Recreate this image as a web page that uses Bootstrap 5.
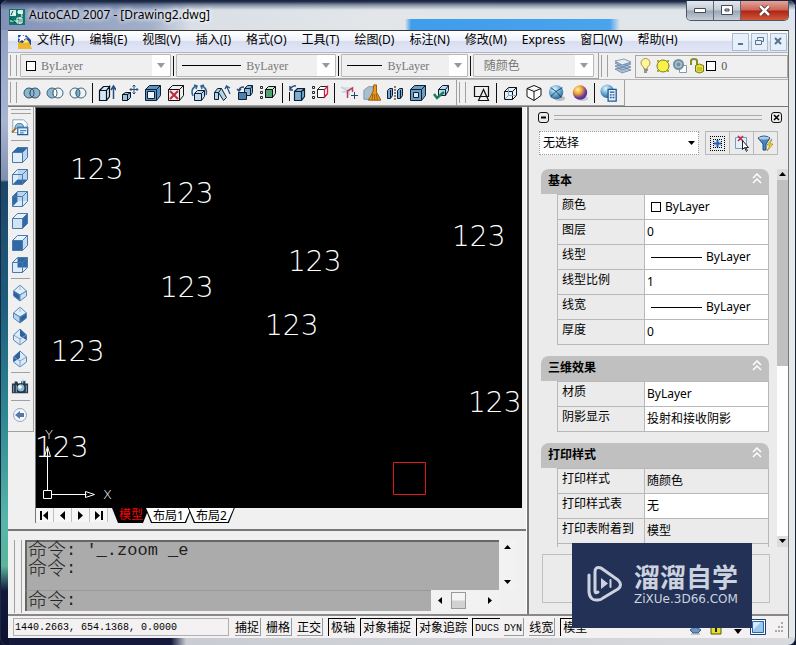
<!DOCTYPE html>
<html lang="zh-CN">
<head>
<meta charset="utf-8">
<meta name="viewport" content="width=device-width, initial-scale=1">
<title>AutoCAD 2007 - [Drawing2.dwg]</title>
<link href="https://cdn.jsdelivr.net/npm/bootstrap@5.3.0/dist/css/bootstrap.min.css" rel="stylesheet">
<style>
:root{--ui:"Noto Sans","Noto Sans CJK SC",sans-serif;--chrome:#f0f0f0;--line:#a0a0a0}
body{font:12px/16px var(--ui);color:#000;background:#0c1430}
button,select,input{font:inherit;color:inherit}
button{padding:0;border:0;background:none}
svg{display:block}
.frame{min-height:100vh;padding:0 6px 7px 7px;border:1px solid #1b2740;border-radius:7px 7px 8px 8px;
 background:linear-gradient(#8a9abd,#a9b6d2 120px,#7f90ae 179px,#1c4668 181px,#1d5c7c 300px,#2e8a94 420px,#55b7a8 520px,#59b59b 565px,#101a3c 590px,#0d1230) left/8px 100% no-repeat,
 linear-gradient(90deg,#151a3c 170px,#c9ccd2 185px,#d9dadd) bottom/100% 8px no-repeat,#e6e9ea}
.titlebar{height:29px;margin:0 -6px 0 -7px;padding:0 6px 0 8px;border-radius:6px 6px 0 0;
 background:linear-gradient(#14203c,#37496f88 4px,transparent 9px),
 linear-gradient(90deg,transparent,#3f9dec 6px,#4aa3ee 205px,transparent) 404px 18px/215px 11px no-repeat,
 linear-gradient(90deg,#8292b6,#a3b0ca 150px,#d9dfe6 190px,#e2e6e9 370px,#dfe5ea)}
.titlebar h1{font-size:12px;line-height:28px;margin:0;font-weight:400;text-shadow:0 0 5px #fff,0 0 5px #fff}
.wbtns{height:20px;border:1px solid #4e5662;border-top:0;border-radius:0 0 5px 5px;overflow:hidden}
.wbtns button{width:27px;background:linear-gradient(#e4e8ee,#c2c9d3 48%,#9aa5b6 52%,#c5ced9);border-right:1px solid #5c6675}
.wbtns button:last-child{width:47px;border:0;background:linear-gradient(#e3a59a,#cc6455 48%,#ad2413 52%,#cf5a3c)}
.client{background:var(--chrome);border-top:1px solid #333;border-right:1px solid #777}
.menubar{height:21px;padding:0 1px 0 5px;background:linear-gradient(#fff,#eef2fb 45%,#d8def0 50%,#e2e7f6)}
.menubar a{color:#000;text-decoration:none;padding:0 7px 3px 8px;line-height:18px}
.menubar a:first-of-type{padding-left:4px}
.mdi{gap:2px}
.mdi button{width:17px;height:18px;border:1px solid #a9bccf;background:#e6f0fa;display:grid;place-items:center}
.bar{height:27px;border-top:1px solid #b5b5b5}
.bar-in{border-right:1px solid var(--line);border-bottom:1px solid var(--line)}
.props-half{flex:590 1 0}.layer-half{flex:190 1 0}
.grip{width:7px;margin:2px 3px 2px 2px;border:solid var(--line);border-width:0 1px;flex:none}
.combo{height:23px;border:1px solid #b8b8b8;border-radius:1px;background:#efefef;color:#777;padding-left:5px;min-width:0}
.combo select{appearance:none;border:0;background:transparent;color:#777;flex:1;min-width:0;padding:0 0 0 5px;font:12px/20px "Liberation Serif","Noto Sans CJK SC",serif;outline:0}
.combo i{width:18px;align-self:stretch;background:#fff;display:grid;place-items:center;flex:none}
.cA{flex:150 1 0}.cB{flex:159 1 0}.cC{flex:124 1 0}.cD{flex:119 1 0}
.vsep{width:1px;height:20px;background:#111;margin:0 2px;flex:none}
.tools .vsep{margin:0 2px 0 3px}
.rule{height:1px;background:#000;flex:none}
.r60{width:59px}.r35{width:35px}.r50{width:51px}
.sw{width:10px;height:10px;border:1px solid #000;background:#fff;flex:none}
.layerbox{flex:153 1 0;border:1px solid #a8a8a8;height:23px;padding-left:2px;gap:1px;color:#555;font-family:"Liberation Serif",serif}
.tools button{width:23px;height:24px;display:grid;place-items:center}
.sidebar{width:26px;height:325px;border-right:1px solid var(--line);border-bottom:1px solid var(--line);flex:none}
.sidebar button{width:24px;height:22px;display:grid;place-items:center;padding-right:2px}
.hgrip{width:20px;height:5px;border:solid var(--line);border-width:1px 0;margin:2px 0}
.hsep{width:19px;height:1px;background:var(--line);margin:2px 0 3px}
.work{border-top:1px solid #777}
.docarea{min-width:0;flex:1;border-right:1px solid #fff}
.model{background:#000;flex:1;position:relative;border-left:1px solid #777;border-top:1px solid #555}
.model,.tabs{margin-left:-3px}
.model text{font-family:"DejaVu Sans";font-weight:200;fill:#fff;font-size:28px}
.model .ax{font-size:13px}
.tabs{height:15px;border-left:1px solid #777}
.tabs .nav4{width:18px;height:14px;border-right:1px solid #c0c0c0;background:#f6f6f6;display:grid;place-items:center}
.sheet{height:15px;line-height:14px;margin-right:-4px;background:#000;clip-path:polygon(0 0,100% 0,calc(100% - 6px) 100%,6px 100%)}
.sheet button{line-height:13px;margin:0}
.sheet.on{color:#f00;padding:0 6px 0 7px}
.sheet.off{padding:0 1px 1px}
.sheet.off button{background:#fff;padding:0 7px;clip-path:polygon(0 0,100% 0,calc(100% - 6px) 100%,6px 100%);height:14px}
.cmd{height:85px;border-top:2px solid #777;padding:9px 10px 1px 6px;margin-top:6px;background:var(--chrome)}
.cmd .grip{margin:0 3px 0 0;width:8px}
.cmdlog{background:#ababab;border:solid #666;border-width:2px 0 0 2px;font:17px/18px "Liberation Mono",monospace;color:#222;height:50px;padding-left:1px}
.cj{font:19px/18px "Noto Sans CJK SC",sans-serif;font-weight:300;padding-bottom:4px}
.cmdlog p{margin:0;white-space:pre;height:18px;display:flex;align-items:center}
.cmdin{background:#ababab;border:solid #999;border-left-color:#666;border-width:1px 0 0 2px;height:21px;font:17px/18px "Liberation Mono",monospace;color:#222;padding-left:1px;min-width:0}
.cmdin label{display:flex;align-items:center;flex:none}
.cmdin input{border:0;background:none;outline:0;min-width:0}
.vs{width:17px;background:#f2f2f2;flex:none;padding:5px 0}
.hs{width:69px;background:#f2f2f2;flex:none;padding:1px 7px}
.thumb{width:15px;height:17px;border:1px solid #999;background:linear-gradient(#f4f4f4 45%,#d2d2d2 55%);margin-right:14px}
.palette{width:261px;border-left:2px solid #777;background:#ebebeb;flex:none;padding:4px 0 0}
.ptop{padding:0 6px 0 9px;gap:4px;height:12px}
.ptop button{width:11px;height:11px;border:1px solid #111;border-radius:3px;display:grid;place-items:center;flex:none}
.dbl{height:5px;border:solid #aaa;border-width:1px 0;flex:1;margin:0 5px 0 1px}
.psel{height:24px;margin:8px 10px 0 10px}
.psel select{appearance:none;border:1px dotted #999;border-radius:0;width:100%;height:24px;background:#fff;padding:0 3px;outline:0}
.psel .arr{position:absolute;right:4px;top:10px;pointer-events:none}
.psel .bx{border:1px solid #b8b8b8;margin-left:6px}
.psel .bx button{width:23px;height:22px;display:grid;place-items:center}
.psel .bx button+button{border-left:1px solid #b8b8b8;width:24px}
.props{height:378px;margin-top:14px;overflow:hidden}
.plist{padding:0 8px 0 12px;flex:1}
.plist h2{font-size:12px;line-height:24px;font-weight:700;margin:0;height:25px;background:#c0c0c0;border-radius:8px 8px 0 0;padding:0 7px}
.plist table{width:calc(100% - 16px);margin:0 0 11px 16px;border-collapse:collapse;table-layout:fixed}
.plist th,.plist td{height:25px;border:1px solid #b8b8b8;padding:0 0 0 4px;font-weight:400;line-height:16px}
.plist th{width:87px;padding-bottom:4px}
.plist td{background:#fff;padding:0 0 0 2px}
.plist td.dim{background:#ebebeb}
.lt{padding-left:3px}
.psb{width:11px;flex:none;background:linear-gradient(#c0c0c0 197px,#fff 197px)}
.psb button{width:11px;height:11px;display:grid;place-items:center;background:#dcdcdc}
.desc{height:49px;margin:7px 18px 11px 13px;border:1px solid #c0c0c0}
.status{height:24px;border-top:2px solid #888;padding:1px 4px 1px 5px;font:12px/14px "Liberation Mono","Noto Sans CJK SC",monospace;background:#f3f1f1}
.coord{width:216px;height:18px;border:1px solid #b0b0b0;font-size:10px;line-height:18px;padding-left:1px;margin-right:6px}
.coord,.status .num{font-family:"Liberation Mono",monospace}
.status .t{height:18px;padding:4px 1px 0 0;border:solid #999;border-width:0 1px 1px 0;margin-right:5px;white-space:nowrap}
.status .t.p{border:solid #000;border-width:1px 0 0 1px;padding:3px 1px 0 2px;margin-right:4px}
.status .num{font-size:10px}
.brand{position:absolute;right:43px;bottom:17px;width:180px;height:85px;background:#233157;color:#cdd3de;padding:0 12px 3px 15px;gap:12px}
.brand b{font:700 26px/26px "Noto Sans CJK SC",sans-serif;display:block;margin-bottom:4px}
.brand small{font:12px/12px "DejaVu Sans",sans-serif;display:block;white-space:nowrap}
</style>
</head>
<body>
<svg width="0" height="0" class="position-absolute" aria-hidden="true">
<defs>
<radialGradient id="gs" cx=".4" cy=".3" r=".8"><stop offset="0" stop-color="#e4f6ff"/><stop offset=".5" stop-color="#69a9d3"/><stop offset="1" stop-color="#1d4f7c"/></radialGradient>
<radialGradient id="gp" cx=".35" cy=".3" r=".75"><stop offset="0" stop-color="#fff3a0"/><stop offset=".4" stop-color="#f0a030"/><stop offset=".75" stop-color="#6a3aa0"/><stop offset="1" stop-color="#4a2b95"/></radialGradient>
<symbol id="box" viewBox="0 0 18 18"><g stroke="#4a7aa9" stroke-linejoin="round"><path fill="var(--f)" d="M1.500 6.500h10v10h-10z"/><path fill="var(--t)" d="M1.500 6.500l5-5h10l-5 5z"/><path fill="var(--s)" d="M11.500 6.500l5-5v10l-5 5z"/></g></symbol>
<symbol id="glass" viewBox="0 0 18 18"><path d="M1.500 6.500l5-5h10v10l-5 5h-10z" fill="#dcecfb"/><path d="M7 2h9v9H7z" fill="#b9d5f0"/></symbol>
<symbol id="iso" viewBox="0 0 18 18"><g stroke="#5b87b8" stroke-linejoin="round"><path fill="#dfeefb" d="M9 1l6.500 6L9 11 2.500 7z"/><path fill="var(--f,#b5d3ee)" d="M2.500 7L9 11v6l-6.500-5z"/><path fill="var(--s,#c9e0f5)" d="M15.500 7L9 11v6l6.500-5z"/><path d="M9 1v5" stroke="#9dbbdb"/></g></symbol>
</defs>
</svg>
<div class="frame d-flex flex-column position-relative">
<header class="titlebar d-flex">
 <svg class="mt-2 me-1" width="16" height="16" viewBox="0 0 16 16"><path fill="#0c7668" d="M0 0h16v16H0z"/><path fill="#cfeee4" d="M1 1h6v6H1zM9 1h5v4H9z"/><path d="M2 6l2-4 2 4M8 3q5-1 5 5M1 12h9M11 8v7M8 9h5v5H8z" fill="none" stroke="#fff"/><path stroke="#084b43" d="M1 9l6 5M2 6l2-4"/></svg>
 <h1 class="flex-grow-1">AutoCAD 2007 - [Drawing2.dwg]</h1>
 <div class="wbtns d-flex">
  <button aria-label="最小化"><svg class="m-auto" width="13" height="6"><path d="M.5.500h11v4H.5z" fill="#fff" stroke="#444b57"/></svg></button>
  <button aria-label="最大化"><svg class="m-auto" width="13" height="11"><path d="M.5.500h11v9H.5zM4 4h4v2H4z" fill="#fff" fill-rule="evenodd" stroke="#444b57"/></svg></button>
  <button aria-label="关闭"><svg class="m-auto" width="13" height="11" viewBox="0 0 13 11"><path d="M2 1l9 9M11 1l-9 9" stroke="#4b2520" stroke-width="4"/><path d="M2 1l9 9M11 1l-9 9" stroke="#fff" stroke-width="2.500"/></svg></button>
 </div>
</header>
<div class="client d-flex flex-column flex-grow-1">
<nav class="menubar d-flex align-items-center">
 <svg class="ms-1" width="16" height="18" viewBox="0 0 16 18"><path fill="#244a9b" d="M1 2h8l5 5v5H1z"/><path fill="#fff" d="M5 0l1 3 3-2-1 3 3 1-4 1 1 3-3-2-3 2 1-3-3-1 3-1z"/><path fill="#eeb72e" d="M1 16V9l5 1 3-4 3 3 3 7z"/><path fill="#ffe98b" d="M6 10l3-4 3 3z"/></svg>
 <a href="#">文件(F)</a><a href="#">编辑(E)</a><a href="#">视图(V)</a><a href="#">插入(I)</a><a href="#">格式(O)</a><a href="#">工具(T)</a><a href="#">绘图(D)</a><a href="#">标注(N)</a><a href="#">修改(M)</a><a href="#">Express</a><a href="#">窗口(W)</a><a href="#">帮助(H)</a>
 <div class="mdi d-flex ms-auto">
  <button aria-label="最小化文档"><svg width="9" height="9"><path d="M2 7h5" stroke="#58728f" stroke-width="2"/></svg></button>
  <button aria-label="还原文档"><svg width="9" height="9"><path d="M2.500 2.500v-2h6v4h-2M.5 3.500h6v4h-6z" fill="none" stroke="#58728f"/></svg></button>
  <button aria-label="关闭文档"><svg width="9" height="9"><path d="M1 1l6 6M7 1l-6 6" stroke="#58728f" stroke-width="2"/></svg></button>
 </div>
</nav>
<div class="bar d-flex">
 <div class="bar-in props-half d-flex align-items-center pe-1">
  <span class="grip align-self-stretch"></span>
  <div class="combo cA d-flex align-items-center"><span class="sw"></span><select aria-label="颜色控制"><option>ByLayer</option></select><i><svg width="8" height="5"><path d="M0 0h8l-4 5z" fill="#999"/></svg></i></div>
  <span class="vsep"></span>
  <div class="combo cB d-flex align-items-center"><span class="rule r60"></span><select aria-label="线型控制"><option>ByLayer</option></select><i><svg width="8" height="5"><path d="M0 0h8l-4 5z" fill="#999"/></svg></i></div>
  <span class="vsep"></span>
  <div class="combo cC d-flex align-items-center"><span class="rule r35"></span><select aria-label="线宽控制"><option>ByLayer</option></select><i><svg width="8" height="5"><path d="M0 0h8l-4 5z" fill="#999"/></svg></i></div>
  <span class="vsep"></span>
  <div class="combo cD d-flex align-items-center"><select aria-label="打印样式控制"><option>随颜色</option></select><i><svg width="8" height="5"><path d="M0 0h8l-4 5z" fill="#999"/></svg></i></div>
 </div>
 <div class="layer-half d-flex align-items-center">
  <span class="grip align-self-stretch"></span>
  <button class="ps-1 pe-1" aria-label="图层特性管理器"><svg width="16" height="16" viewBox="0 0 16 16"><g fill="#a9c0da" stroke="#5b7896" stroke-width=".7"><path d="M0 11l9-2 7 3-9 3zM0 8l9-2 7 3-9 3zM0 5l9-2 7 3-9 3z"/><path fill="#e5eef7" d="M0 3l9-2 7 3-9 3z"/></g></svg></button>
  <div class="layerbox d-flex align-items-center">
   <svg width="16" height="18" viewBox="0 0 16 18"><path d="M6 12c0-3-3-3-3-6a4.500 4.500 0 0 1 9 0c0 3-3 3-3 6z" fill="#fff4a0" stroke="#a79a3a"/><path d="M6 13h4M6 15h3" stroke="#777" stroke-width="1.500"/></svg>
   <svg width="16" height="18" viewBox="0 0 16 18"><path d="M2 3h2v2H2zM12 3h2v2h-2zM2 13h2v2H2zM12 13h2v2h-2z" fill="#a8b030"/><circle cx="8" cy="9" r="6" fill="#fbf044" stroke="#77792c"/></svg>
   <svg width="16" height="18" viewBox="0 0 16 18"><path fill="#fff" stroke="#8699a8" d="M7.500 8.500h7v7h-7z"/><circle cx="6.500" cy="7.500" r="4.500" fill="#a9c4ce" stroke="#6f919f" stroke-width="2"/><circle cx="6.500" cy="7.500" r="2" fill="#6f919f"/></svg>
   <svg width="16" height="18" viewBox="0 0 16 18"><path d="M2 8V4q0-2 3-2t3 2v6" fill="none" stroke="#888b22" stroke-width="2"/><path d="M6.500 8.500q4-3 8 0v6q-4 3-8 0z" fill="#e9e13c" stroke="#77771c"/><path d="M8 11h5M8 13h5" stroke="#aaa324"/></svg>
   <span class="sw"></span><span class="ps-1">0</span>
  </div>
 </div>
</div>
<div class="bar tools d-flex">
 <div class="bar-in d-flex align-items-center">
  <span class="grip align-self-stretch"></span>
  <button aria-label="并集"><svg width="18" height="12" viewBox="0 0 18 12"><g fill="#8fb6cd" stroke="#2d5168"><circle cx="6" cy="6" r="5"/><circle cx="12" cy="6" r="5"/><ellipse cx="9" cy="6" rx="2" ry="4"/></g></svg></button>
  <button aria-label="差集"><svg width="18" height="12" viewBox="0 0 18 12"><g stroke="#3f657d"><circle cx="6" cy="6" r="5" fill="#8fb6cd"/><circle cx="12" cy="6" r="5" fill="#f0f6fa"/><ellipse cx="9" cy="6" rx="2" ry="4" fill="#fff"/></g></svg></button>
  <button aria-label="交集"><svg width="18" height="12" viewBox="0 0 18 12"><g stroke="#3f657d"><circle cx="6" cy="6" r="5" fill="#eef3f6"/><circle cx="12" cy="6" r="5" fill="#eef3f6"/><ellipse cx="9" cy="6" rx="2" ry="4" fill="#7fa8c2"/></g></svg></button>
  <span class="vsep"></span>
  <button aria-label="拉伸面"><svg width="18" height="18" viewBox="0 0 18 18"><path d="M1.500 6.500l4-4h6l-3 4v10h-7zM1.500 6.500h7l3-4v10l-3 4" fill="#d5e6f2" stroke="#08121c" stroke-width="1.200"/><path d="M15.500 15V3M13 6l2.500-4L18 6" fill="none" stroke="#2b4c80" stroke-width="1.500"/></svg></button>
  <button aria-label="移动面"><svg width="18" height="18" viewBox="0 0 18 18"><path d="M1.500 10.500l3-2h5v5l-3 3h-5zM1.500 10.500h5v6M6.500 10.500l3-2" fill="#9cc3df" stroke="#08121c"/><path d="M13 1v9M9 5.500h8M11.500 2.500L13 1l1.500 1.500M11.500 8.500L13 10l1.500-1.500M10.500 4L9 5.500 10.500 7M15.500 4L17 5.500 15.500 7" fill="none" stroke="#2b4c80"/></svg></button>
  <button aria-label="偏移面"><svg width="18" height="18" viewBox="0 0 18 18"><path d="M1.500 5.500l4-4h11v10l-4 5h-11zM1.500 5.500h11v11M12.500 5.500l4-4" fill="#5b93c4" stroke="#0b2034"/><path d="M3.500 7.500h7v7h-7z" fill="#eef4fa" stroke="#0b2034"/></svg></button>
  <button aria-label="删除面"><svg width="18" height="18" viewBox="0 0 18 18"><path d="M1.500 5.500l4-4h11v10l-4 5h-11zM1.500 5.500h11v11M12.500 5.500l4-4" fill="#eee" stroke="#111"/><path d="M3 7l8 8M11 7l-8 8" stroke="#c4283c" stroke-width="2"/></svg></button>
  <button aria-label="旋转面"><svg width="18" height="18" viewBox="0 0 18 18"><path d="M4.500 9.500l3-3h7v6l-3 4h-7zM4.500 9.500h7v7M11.500 9.500l3-3" fill="#bfdaed" stroke="#0b2034"/><path d="M6 2Q0 5 3 12M12 2q6 3 4 9M4 1l3 1-1 3M14 1l-3 1 1 3" fill="none" stroke="#2e6395" stroke-width="1.500"/></svg></button>
  <button aria-label="倾斜面"><svg width="18" height="18" viewBox="0 0 18 18"><path d="M1.500 15.500v-7l3-4h4l5 9-3 3-5-8v7z" fill="#b4d4e8" stroke="#0b2034"/><path d="M1.500 8.500h4l3-4" fill="none" stroke="#0b2034"/><path d="M17 10l-3-7M12 5l1.500-3L17 4" fill="none" stroke="#264f86" stroke-width="1.300"/></svg></button>
  <button aria-label="复制面"><svg width="18" height="18" viewBox="0 0 18 18"><path d="M8.500 4.500l3-3h5v7l-2 3h-6zM8.500 4.500h6v7M14.500 4.500l2-3" fill="#8cb6d6" stroke="#0b2034"/><path d="M2.500 8.500h8v7h-8z" fill="#4c80ae" stroke="#0b2034"/><path d="M3 7q0-4 5-4M1 5l2 2 2-2" fill="none" stroke="#2b4c80" stroke-width="1.500"/></svg></button>
  <button aria-label="着色面"><svg width="18" height="18" viewBox="0 0 18 18"><path d="M1.500 2.500h2v2h-2zM1.500 7.500h2v2h-2zM1.500 12.500h2v2h-2z" fill="#fff" stroke="#222"/><path d="M6.500 5.500l3-3h7v7l-3 4h-7zM13.500 5.500l3-3" fill="#c6ead4" stroke="#111"/><path d="M6.500 5.500h7v8h-7z" fill="#4aa571" stroke="#111"/></svg></button>
  <span class="vsep"></span>
  <button aria-label="复制边"><svg width="18" height="18" viewBox="0 0 18 18"><path d="M6.500 7.500l3-3h7v8l-3 4h-7zM6.500 7.500h7v9M13.500 7.500l3-3" fill="#7fafd6" stroke="#0b2034" stroke-width="1.200"/><path d="M1.500 17V8" stroke="#111"/><path d="M2 5q3-4 6-3M2 2v4h3" fill="none" stroke="#2b4c80" stroke-width="1.500"/></svg></button>
  <button aria-label="着色边"><svg width="18" height="18" viewBox="0 0 18 18"><path d="M1.500 2.500h2v2h-2zM1.500 7.500h2v2h-2zM1.500 12.500h2v2h-2z" fill="#fff" stroke="#222"/><path d="M6.500 5.500l3-3h7v7l-3 4h-7zM6.500 5.500h7" fill="#fff" stroke="#222"/><path d="M13.500 13V5.500l3-3v7z" fill="#fff" stroke="#d02245" stroke-width="1.300"/></svg></button>
  <span class="vsep"></span>
  <button aria-label="压印"><svg width="18" height="18" viewBox="0 0 18 18"><path d="M1 3l7 4 5-4M2 8l7-1v4" fill="#d8e2ec" stroke="#c5d2df" stroke-width="1.500"/><path d="M7.500 14V7l5-3v4" fill="none" stroke="#c23a55" stroke-width="1.500"/><path d="M14.500 8v7M11 11.500h7" stroke="#25466f"/></svg></button>
  <button aria-label="清除"><svg width="18" height="18" viewBox="0 0 20 20"><path d="M1 7l5-4h8v14H1z" fill="#a9bfd0" stroke="#7891a5"/><path d="M12 1h3v8l5 9H6l5-9z" fill="#eb9c1c" stroke="#8d5309"/><path d="M11 11l-1 7M13 11v7M15 11l1 7" stroke="#8d5309"/></svg></button>
  <button aria-label="分割"><svg width="18" height="18" viewBox="0 0 18 18"><path d="M1.500 6.500l2-2h3v7l-2 3h-3zM11.500 6.500l2-2h3v7l-2 3h-3z" fill="#7faad0" stroke="#0b2034"/><path d="M4.500 6v8M14.500 6v8" stroke="#0b2034"/><path d="M9 2v14" stroke="#111" stroke-dasharray="2 1"/></svg></button>
  <button aria-label="抽壳"><svg width="18" height="18" viewBox="0 0 18 18"><path d="M1.500 5.500l4-4h11v10l-4 5h-11zM1.500 5.500h11v11M12.500 5.500l4-4" fill="#6f9dc2" stroke="#0b2034"/><path d="M4.500 8.500h5v5h-5z" fill="#d5e7f5" stroke="#0b2034"/></svg></button>
  <button aria-label="检查"><svg width="18" height="18" viewBox="0 0 18 18"><path d="M6.500 5.500l4-4h6v5l-3 5h-7zM6.500 5.500h7v6M13.500 5.500l3-4" fill="#b8dbef" stroke="#0b2034"/><path d="M2 10l3 4 7-6" fill="none" stroke="#1d7d57" stroke-width="2.500"/></svg></button>
  <span class="ps-1"></span>
 </div>
 <div class="bar-in d-flex align-items-center pe-1">
  <span class="grip align-self-stretch me-1"></span>
  <button aria-label="二维线框"><svg width="18" height="18" viewBox="0 0 18 18"><path d="M1.500 2.500h14v10h-14zM5.500 16.500l5-11 5 11z" fill="none" stroke="#111" stroke-width="1.200"/></svg></button>
  <span class="vsep"></span>
  <button aria-label="三维线框"><svg width="18" height="18" viewBox="0 0 18 18"><path d="M2.500 7.500h8v8h-8zM2.500 7.500l4-4h8l-4 4M10.500 15.500l4-4v-8" fill="#e7f0f7" stroke="#111"/><path d="M6.500 4v7.500H14M6.500 11.500l-4 4" stroke="#7ea8c8" fill="none"/></svg></button>
  <button aria-label="三维隐藏"><svg width="18" height="18" viewBox="0 0 18 18"><path d="M9 1.500l7 3v7l-7 5-7-4v-8zM2 4.500l7 3 7-3M9 7.500v9" fill="#fff" stroke="#111"/></svg></button>
  <button aria-label="真实"><svg width="18" height="18" viewBox="0 0 20 20"><ellipse cx="13" cy="16" rx="6" ry="3" fill="#b9bec3"/><circle cx="9" cy="9" r="8" fill="url(#gs)"/><path d="M3 4q6 3 12 11M16 4Q8 8 3 14" fill="none" stroke="#143b60"/></svg></button>
  <button aria-label="概念"><svg width="18" height="18" viewBox="0 0 20 20"><ellipse cx="13" cy="16" rx="6" ry="3" fill="#c9c9d0"/><circle cx="10" cy="9.500" r="8" fill="url(#gp)"/></svg></button>
  <span class="vsep"></span>
  <button aria-label="视觉样式管理"><svg width="18" height="18" viewBox="0 0 20 20"><circle cx="8" cy="8" r="7.500" fill="url(#gs)"/><path d="M9 6h9v13H9z" fill="#e1effa" stroke="#1f5696" stroke-width="1.400"/><path d="M11 9h5M11 12h2M14 12h2M11 15h2M14 15h2" stroke="#1f5696" stroke-width="1.500"/></svg></button>
 </div>
</div>
<main class="work d-flex flex-grow-1">
 <div class="docarea d-flex flex-column">
  <div class="d-flex flex-grow-1">
   <aside class="sidebar d-flex flex-column align-items-center me-1">
    <span class="hgrip"></span>
    <button aria-label="命名视图"><svg width="18" height="18" viewBox="0 0 20 20"><path d="M2 2h12l4 4v10H2z" fill="#fff" stroke="#7b9cb5"/><path d="M4 12q1-7 6-6 4 0 4 4" fill="#9bbdd6" stroke="#4e7a9b"/><path d="M1 16l5-5" stroke="#a4692d" stroke-width="2"/><path d="M7.500 10.500h11v8h-11z" fill="#e7f3fd" stroke="#225c95" stroke-width="1.300"/><path d="M7 11h12M10 14h7M10 16.500h4" stroke="#4388c1" stroke-width="1.300"/></svg></button>
    <span class="hsep"></span>
    <button aria-label="俯视"><svg width="18" height="18" style="--t:#3069a6;--f:#e2effb;--s:#bcd7ee"><use href="#box"/></svg></button>
    <button aria-label="仰视"><svg width="18" height="18" viewBox="0 0 18 18"><use href="#glass"/><path d="M1.500 16.500l5-5h10l-5 5z" fill="#3069a6"/><path d="M1.500 6.500l5-5h10v10l-5 5h-10zM1.500 6.500h10v10M11.500 6.500l5-5" fill="none" stroke="#4a7aa9"/></svg></button>
    <button aria-label="左视"><svg width="18" height="18" viewBox="0 0 18 18"><use href="#glass"/><path d="M1.500 6.500l5-5v10l-5 5z" fill="#3069a6"/><path d="M1.500 6.500l5-5h10v10l-5 5h-10zM1.500 6.500h10v10M11.500 6.500l5-5" fill="none" stroke="#4a7aa9"/></svg></button>
    <button aria-label="右视"><svg width="18" height="18" style="--t:#e5f1fc;--f:#cfe3f5;--s:#3069a6"><use href="#box"/></svg></button>
    <button aria-label="主视"><svg width="18" height="18" style="--t:#e5f1fc;--f:#3069a6;--s:#c5dcf1"><use href="#box"/></svg></button>
    <button aria-label="后视"><svg width="18" height="18" viewBox="0 0 18 18"><use href="#glass"/><path d="M6.500 1.500h10v10h-10z" fill="#3069a6"/><path d="M1.500 6.500l5-5h10v10l-5 5h-10zM1.500 6.500h10v10M11.500 6.500l5-5" fill="none" stroke="#4a7aa9"/></svg></button>
    <span class="hsep"></span>
    <button aria-label="西南等轴测"><svg width="18" height="18" style="--f:#2d639d"><use href="#iso"/></svg></button>
    <button aria-label="东南等轴测"><svg width="18" height="18" style="--s:#2d639d"><use href="#iso"/></svg></button>
    <button aria-label="东北等轴测"><svg width="18" height="18" viewBox="0 0 18 18"><path d="M9 1l6.500 6v5L9 17l-6.500-5V7z" fill="#dceaf8" stroke="#5b87b8"/><path d="M9 1l6.500 6v5L9 8z" fill="#2d639d"/><path d="M2.500 7L9 11l6.500-4M9 11v6" fill="none" stroke="#7ea3cc"/></svg></button>
    <button aria-label="西北等轴测"><svg width="18" height="18" viewBox="0 0 18 18"><path d="M9 1l6.500 6v5L9 17l-6.500-5V7z" fill="#dceaf8" stroke="#5b87b8"/><path d="M9 1L2.500 7v5L9 8z" fill="#2d639d"/><path d="M2.500 7L9 11l6.500-4M9 11v6" fill="none" stroke="#7ea3cc"/></svg></button>
    <span class="hsep"></span>
    <button aria-label="创建相机"><svg width="18" height="18" viewBox="0 0 20 20"><path d="M1 6h3V4h3l1 2h3l1-3h4v3h3v11H1z" fill="#263a4f"/><circle cx="11" cy="11" r="4.500" fill="#8db7d3" stroke="#101b27"/><circle cx="10" cy="10" r="2" fill="#fff"/><path d="M3 8v8M6 8v8M17 8v8" stroke="#8fa6b7"/><path d="M13 0v6M10 3h6" stroke="#bfe0f7"/></svg></button>
    <span class="hsep"></span>
    <button aria-label="上一个视图"><svg width="16" height="16" viewBox="0 0 16 16"><circle cx="8" cy="8" r="6.500" fill="#f4f7fb" stroke="#93a9c4"/><path d="M3 8l5-4v2h4v4H8v2z" fill="#5578a3"/></svg></button>
   </aside>
   <div class="d-flex flex-column flex-grow-1 pe-1">
    <div class="model">
     <svg class="position-absolute top-0 start-0" width="100%" height="100%">
      <text x="34" y="71">123</text><text x="124" y="95">123</text><text x="416" y="138">123</text><text x="252" y="163">123</text><text x="124" y="189">123</text><text x="229" y="227">123</text><text x="15" y="253">123</text><text x="432" y="304">123</text><text x="-1" y="349">123</text>
      <text class="ax" x="9" y="331">Y</text><text class="ax" x="67" y="391">X</text>
      <g fill="none" stroke="#fff"><path d="M7.500 382.500h8v8h-8zM11.500 382.500v-42M8.500 348.500l3-10 3 10zM15.500 386.500h35M49.500 383.500l9 3-9 3z"/></g>
      <path d="M357.500 354.500h32v32h-32z" fill="none" stroke="#e01818"/>
     </svg>
    </div>
    <div class="tabs d-flex">
     <button class="nav4" aria-label="第一个"><svg width="9" height="9"><path d="M1 0v9" stroke="#000" stroke-width="2"/><path d="M8 0v9L3 4.500z"/></svg></button>
     <button class="nav4" aria-label="前一个"><svg width="6" height="9"><path d="M5 0v9L0 4.500z"/></svg></button>
     <button class="nav4" aria-label="后一个"><svg width="6" height="9"><path d="M0 0v9l5-4.500z"/></svg></button>
     <button class="nav4 me-1" aria-label="最后一个"><svg width="9" height="9"><path d="M8 0v9" stroke="#000" stroke-width="2"/><path d="M1 0v9l5-4.500z"/></svg></button>
     <span class="sheet on"><button>模型</button></span><span class="sheet off"><button>布局1</button></span><span class="sheet off"><button>布局2</button></span>
    </div>
   </div>
  </div>
  <section class="cmd d-flex">
   <span class="grip"></span>
   <div class="flex-grow-1">
    <div class="d-flex"><div class="cmdlog flex-grow-1"><p><span class="cj">命令</span>: '_.zoom _e</p><p><span class="cj">命令</span>:</p></div>
     <div class="vs d-flex flex-column justify-content-between align-items-center"><button aria-label="上滚"><svg width="7" height="5"><path d="M0 4h7L3.500 0z"/></svg></button><button aria-label="下滚"><svg width="7" height="5"><path d="M0 0h7L3.500 4z"/></svg></button></div></div>
    <div class="d-flex pe-3"><div class="cmdin d-flex flex-grow-1"><label for="cl"><span class="cj">命令</span>:</label><input id="cl" class="flex-grow-1"></div>
     <div class="hs d-flex justify-content-between align-items-center"><button aria-label="左滚"><svg width="5" height="7"><path d="M4 0v7L0 3.500z"/></svg></button><span class="thumb"></span><button aria-label="右滚"><svg width="5" height="7"><path d="M0 0v7l4-3.500z"/></svg></button></div></div>
   </div>
  </section>
 </div>
 <aside class="palette d-flex flex-column">
  <div class="ptop d-flex align-items-center"><button aria-label="自动隐藏"><svg width="7" height="7"><path d="M1 3.500h5" stroke="#000" stroke-width="2"/></svg></button><span class="dbl"></span><button aria-label="关闭特性"><svg width="7" height="7"><path d="M1 1l5 5M6 1l-5 5" stroke="#000" stroke-width="1.500"/></svg></button></div>
  <div class="psel d-flex">
   <div class="position-relative flex-grow-1"><select aria-label="选择对象"><option>无选择</option></select><svg class="arr" width="7" height="4"><path d="M0 0h7L3.500 4z"/></svg></div>
   <div class="bx d-flex">
    <button aria-label="切换 PICKADD"><svg width="17" height="17"><path d="M4 4h9v9H4z" fill="#d3e5f8"/><path d="M1 1.500h15M1 15.500h15M1.500 1v15M15.500 1v15M4 4.500h9M4 12.500h9M4.500 4v9M12.500 4v9" stroke="#000" stroke-dasharray="1 1"/><path d="M8.500 5v7M5 8.500h7" stroke="#2760a8" stroke-width="2"/></svg></button>
    <button aria-label="选择对象"><svg width="17" height="17"><path d="M2.500 2.500h11v11h-11z" fill="#e5f0fa" stroke="#6f9dc6"/><path d="M5 1l5 5M10 1L5 6" stroke="#c32039" stroke-width="1.500"/><path d="M9.500 5.500v9l2-2 2 4 1-1-2-3h3z" fill="#fff" stroke="#222"/></svg></button>
    <button aria-label="快速选择"><svg width="17" height="17"><path d="M1 3q6-4 12 0l-4 6v6H6V9z" fill="#4a86bd" stroke="#204c7c"/><ellipse cx="7" cy="3" rx="5" ry="1.500" fill="#a9cbe7"/><path d="M15 4l-5 6h3l-3 6 6-7h-3z" fill="#ffe52c" stroke="#a2830d" stroke-width=".7"/></svg></button>
   </div>
  </div>
  <div class="props d-flex">
   <div class="plist">
    <h2 class="d-flex justify-content-between">基本<svg class="mt-1" width="10" height="12"><path d="M1 5l4-4 4 4M1 10l4-4 4 4" fill="none" stroke="#fff" stroke-width="1.500"/></svg></h2>
    <table><tr><th scope="row">颜色</th><td><div class="d-flex align-items-center"><span class="sw ms-1 me-1"></span><span>ByLayer</span></div></td></tr><tr><th scope="row">图层</th><td>0</td></tr><tr><th scope="row">线型</th><td><div class="d-flex align-items-center ps-1"><span class="rule r50 me-1"></span><span>ByLayer</span></div></td></tr><tr><th scope="row">线型比例</th><td>1</td></tr><tr><th scope="row">线宽</th><td><div class="d-flex align-items-center ps-1"><span class="rule r50 me-1"></span><span>ByLayer</span></div></td></tr><tr><th scope="row">厚度</th><td>0</td></tr></table>
    <h2 class="d-flex justify-content-between">三维效果<svg class="mt-1" width="10" height="12"><path d="M1 5l4-4 4 4M1 10l4-4 4 4" fill="none" stroke="#fff" stroke-width="1.500"/></svg></h2>
    <table><tr><th scope="row">材质</th><td>ByLayer</td></tr><tr><th scope="row">阴影显示</th><td>投射和接收阴影</td></tr></table>
    <h2 class="d-flex justify-content-between">打印样式<svg class="mt-1" width="10" height="12"><path d="M1 5l4-4 4 4M1 10l4-4 4 4" fill="none" stroke="#fff" stroke-width="1.500"/></svg></h2>
    <table><tr><th scope="row">打印样式</th><td class="dim">随颜色</td></tr><tr><th scope="row">打印样式表</th><td>无</td></tr><tr><th scope="row">打印表附着到</th><td class="dim">模型</td></tr><tr><th></th><td class="dim"></td></tr></table>
   </div>
   <div class="psb d-flex flex-column justify-content-between"><button aria-label="向上"><svg width="7" height="5"><path d="M0 4h7L3.500 0z"/></svg></button><button aria-label="向下"><svg width="7" height="5"><path d="M0 0h7L3.500 4z"/></svg></button></div>
  </div>
  <div class="desc"></div>
 </aside>
</main>
<footer class="status d-flex align-items-center">
 <span class="coord">1440.2663, 654.1368, 0.0000</span>
 <button class="t">捕捉</button><button class="t">栅格</button><button class="t">正交</button><button class="t p">极轴</button><button class="t p">对象捕捉</button><button class="t p">对象追踪</button><button class="t p num">DUCS</button><button class="t num">DYN</button><button class="t">线宽</button><button class="t p">模型</button>
 <div class="ms-auto d-flex align-items-center gap-2">
  <svg width="13" height="16"><path d="M1 11q5-5 11 0l-3 3H4z" fill="#6c95c6" stroke="#31598d"/><path d="M2 15h9" stroke="#999"/></svg>
  <svg width="12" height="16"><path d="M1 6h10v9H1z" fill="#e5df25" stroke="#55550f"/><path d="M6 7v6" stroke="#222" stroke-width="2"/></svg>
  <svg class="ms-1" width="8" height="16"><path d="M0 10h8l-4 5z"/></svg>
  <button aria-label="全屏显示"><svg width="16" height="16"><path d="M.5.500h15v15H.5z" fill="#fff" stroke="#173f7b"/><path d="M2.500 2.500h11v11h-11z" fill="#9cc7ed" stroke="#2b65a5"/><path d="M3 3h8l-8 8z" fill="#d6e9fa"/></svg></button>
  <svg width="10" height="14"><path d="M8 2v11M5 6v7M2 10v3" stroke="#aaa" stroke-width="2" stroke-dasharray="2 2"/></svg>
 </div>
</footer>
</div>
<div class="brand d-flex align-items-center">
 <svg width="35" height="38" viewBox="0 0 35 38" fill="none" stroke="#cdd3de" stroke-width="3" stroke-linecap="round" stroke-linejoin="round"><path d="M2 10v17q1 9 9 8 3 0 5-2l15-9q5-4 0-9L14 3Q8 1 8 7v19q0 3 3 1"/><path d="M14 13v11l7-5.500z" fill="#cdd3de" stroke="none"/><path d="M23.500 15v7" stroke-width="2"/></svg>
 <div><b>溜溜自学</b><small>ZiXUe.3D66.COM</small></div>
</div>
</div>
<script src="https://cdn.jsdelivr.net/npm/bootstrap@5.3.0/dist/js/bootstrap.bundle.min.js"></script>
</body>
</html>
